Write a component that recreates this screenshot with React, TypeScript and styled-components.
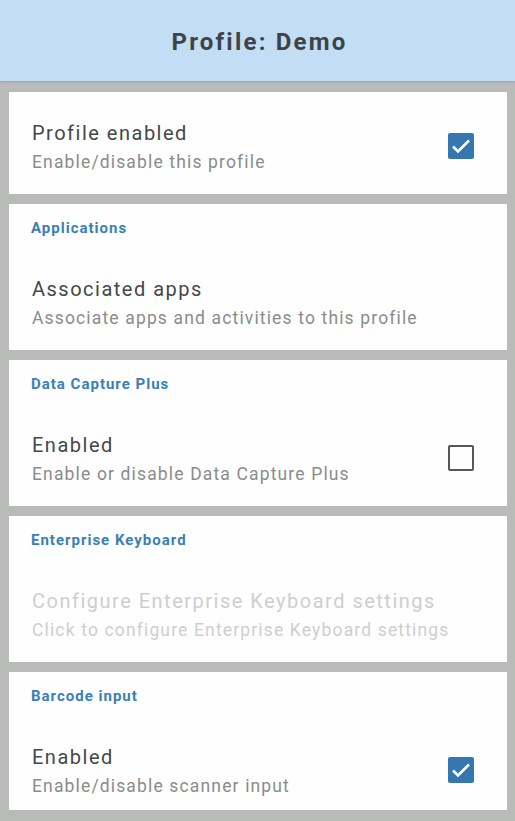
import React from "react";
import styled, { createGlobalStyle } from "styled-components";

const GlobalStyle = createGlobalStyle`
  html, body {
    margin: 0;
    padding: 0;
    background: #b9bbb9;
    font-family: Roboto, "Noto Sans", "Liberation Sans", sans-serif;
    overflow: hidden;
  }
`;

const Screen = styled.div`
  width: 515px;
  height: 821px;
  background: #b9bbb9;
  display: flex;
  flex-direction: column;
`;

const TopBar = styled.header`
  height: 81px;
  background: #c2ddf4;
  display: flex;
  align-items: center;
  justify-content: center;
  box-shadow: 0 1px 2px rgba(0, 0, 0, 0.15);
`;

const Title = styled.h1`
  margin: 2px 0 0 4px;
  font-size: 24px;
  font-weight: 700;
  color: #3d4347;
  letter-spacing: 2.2px;
`;

const List = styled.div`
  display: flex;
  flex-direction: column;
  gap: 10px;
  padding: 11px 8px 0 9px;
`;

const Card = styled.section<{ $tight?: boolean }>`
  background: #fdfefd;
  display: flex;
  flex-direction: column;
  padding-bottom: ${(p) => (p.$tight ? "9px" : "17px")};
`;

const SectionLabel = styled.div`
  padding: 14px 0 10px 22px;
  line-height: 20px;
  font-size: 15px;
  font-weight: 700;
  color: #3a80b8;
  letter-spacing: 1px;
`;

const Item = styled.div`
  display: flex;
  align-items: center;
  padding: 27px 33px 0 23px;
`;

const Texts = styled.div`
  flex: 1;
  display: flex;
  flex-direction: column;
`;

const ItemTitle = styled.div<{ $disabled?: boolean }>`
  font-size: 20px;
  line-height: 28px;
  letter-spacing: 1.5px;
  color: ${(p) => (p.$disabled ? "#cdcfcf" : "#454849")};
`;

const ItemSub = styled.div<{ $disabled?: boolean }>`
  font-size: 17.5px;
  line-height: 30px;
  letter-spacing: 1.15px;
  color: ${(p) => (p.$disabled ? "#cdcfcf" : "#8a8c8c")};
`;

const Box = styled.div<{ $checked?: boolean }>`
  width: 26px;
  height: 26px;
  margin-bottom: 5px;
  box-sizing: border-box;
  border-radius: 2px;
  display: flex;
  flex-shrink: 0;
  align-items: center;
  justify-content: center;
  background: ${(p) => (p.$checked ? "#3777b0" : "transparent")};
  border: ${(p) => (p.$checked ? "none" : "2.5px solid #555859")};
`;

const Check: React.FC<{ checked?: boolean }> = ({ checked }) => (
  <Box $checked={checked}>
    {checked && (
      <svg width="26" height="26" viewBox="0 0 26 26">
        <path d="M5 13.5 L10 18.5 L21 7.5" fill="none" stroke="#fff" strokeWidth="2.6" />
      </svg>
    )}
  </Box>
);

type Row = {
  label?: string;
  title: string;
  sub: string;
  check?: boolean;
  disabled?: boolean;
};

const rows: Row[] = [
  { title: "Profile enabled", sub: "Enable/disable this profile", check: true },
  { label: "Applications", title: "Associated apps", sub: "Associate apps and activities to this profile" },
  { label: "Data Capture Plus", title: "Enabled", sub: "Enable or disable Data Capture Plus", check: false },
  {
    label: "Enterprise Keyboard",
    title: "Configure Enterprise Keyboard settings",
    sub: "Click to configure Enterprise Keyboard settings",
    disabled: true,
  },
  { label: "Barcode input", title: "Enabled", sub: "Enable/disable scanner input", check: true },
];

const App: React.FC = () => (
  <Screen>
    <GlobalStyle />
    <TopBar>
      <Title>Profile: Demo</Title>
    </TopBar>
    <List>
      {rows.map((r, i) => (
        <Card key={i} $tight={i === rows.length - 1}>
          {r.label && <SectionLabel>{r.label}</SectionLabel>}
          <Item>
            <Texts>
              <ItemTitle $disabled={r.disabled}>{r.title}</ItemTitle>
              <ItemSub $disabled={r.disabled}>{r.sub}</ItemSub>
            </Texts>
            {r.check !== undefined && <Check checked={r.check} />}
          </Item>
        </Card>
      ))}
    </List>
  </Screen>
);

export default App;
